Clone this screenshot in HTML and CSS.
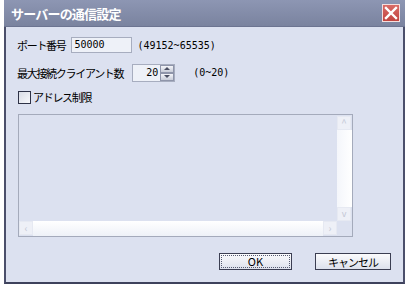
FILE: index.html
```html
<!DOCTYPE html>
<html lang="ja">

<head>
  <meta charset="UTF-8">
  <title>サーバーの通信設定</title>
  <link rel="stylesheet" href="styles.css">
</head>

<body>
  <div class="window">
    <div class="titlebar">
      <span class="title">サーバーの通信設定</span>
      <div class="close">
        <svg width="14" height="14" viewBox="0 0 14 14">
          <path d="M2 2 L12 12 M12 2 L2 12" stroke="#fff" stroke-width="2.4" stroke-linecap="square"/>
        </svg>
      </div>
    </div>

    <div class="content">
      <div class="row row-port">
        <span class="label">ポート番号</span>
        <div class="textbox port">50000</div>
        <span class="range">(49152~65535)</span>
      </div>

      <div class="row row-clients">
        <span class="label">最大接続クライアント数</span>
        <div class="spin">
          <div class="spin-value">20</div>
          <div class="spin-btns">
            <div class="spin-btn"><span class="arrow-up"></span></div>
            <div class="spin-btn"><span class="arrow-down"></span></div>
          </div>
        </div>
        <span class="range range-clients">(0~20)</span>
      </div>

      <div class="row row-check">
        <span class="checkbox"></span>
        <span class="label">アドレス制限</span>
      </div>

      <div class="listbox">
        <div class="list-main">
          <div class="list-area"></div>
          <div class="vscroll">
            <div class="sbtn">&#94;</div>
            <div class="vtrack"></div>
            <div class="sbtn sbtn-down">v</div>
          </div>
        </div>
        <div class="hscroll">
          <div class="sbtn">&lsaquo;</div>
          <div class="htrack"></div>
          <div class="sbtn">&rsaquo;</div>
          <div class="corner"></div>
        </div>
      </div>

      <div class="buttons">
        <button class="btn btn-ok"><span class="focus">OK</span></button>
        <button class="btn btn-cancel">キャンセル</button>
      </div>
    </div>
  </div>
</body>

</html>
```

FILE: styles.css
```css
body {
  margin: 0;
  background: #ffffff;
  font-family: "Noto Sans CJK JP", "DejaVu Sans", sans-serif;
  font-size: 11px;
  color: #000000;
}

.window {
  margin-left: 4px;
  width: 401px;
  height: 284px;
  box-sizing: border-box;
  background: #dce1f0;
  border-left: 2px solid #4b4f6b;
  border-right: 2px solid #4b4f6b;
  border-bottom: 2px solid #3e425c;
}

.titlebar {
  height: 27px;
  margin: 0 -2px;
  background: linear-gradient(#8d96b3, #7a839f);
  border-bottom: 1px solid #6c7491;
  box-sizing: border-box;
  display: flex;
  align-items: center;
  justify-content: space-between;
  padding: 0 5px 0 7px;
}

.title {
  color: #ffffff;
  font-size: 13px;
  font-weight: bold;
  letter-spacing: -0.8px;
}

.close {
  width: 18px;
  height: 18px;
  box-sizing: border-box;
  border: 1px solid #f4dede;
  background: linear-gradient(#d96b66, #c14440);
  display: flex;
  align-items: center;
  justify-content: center;
}

.content {
  padding: 9px 0 0 11px;
}

.row {
  display: flex;
  align-items: center;
}

.row-port {
  height: 18px;
}

.row-clients {
  height: 19px;
  margin-top: 9px;
}

.row-check {
  height: 14px;
  margin-top: 8px;
}

.label {
  line-height: 14px;
  letter-spacing: -1.3px;
}

.textbox {
  height: 16px;
  box-sizing: border-box;
  border: 1px solid #a7adbf;
  background: #eef1f8;
  font-family: "DejaVu Sans Mono", monospace;
  font-size: 10px;
  line-height: 14px;
}

.port {
  width: 61px;
  margin-left: 5px;
  padding-left: 3px;
}

.range {
  margin-left: 6px;
  font-family: "DejaVu Sans Mono", monospace;
  font-size: 10px;
}

.range-clients {
  margin-left: 18px;
}

.spin {
  display: flex;
  width: 43px;
  height: 18px;
  margin-left: 9px;
  box-sizing: border-box;
  border: 1px solid #a7adbf;
  background: #eef1f8;
}

.spin-value {
  flex: 1;
  text-align: right;
  padding-right: 2px;
  font-family: "DejaVu Sans Mono", monospace;
  font-size: 10px;
  line-height: 16px;
}

.spin-btns {
  width: 14px;
  display: flex;
  flex-direction: column;
}

.spin-btn {
  flex: 1;
  background: linear-gradient(#f4f5f9, #c8ccd8);
  border: 1px solid #8f95aa;
  display: flex;
  align-items: center;
  justify-content: center;
}

.arrow-up {
  border: 3px solid transparent;
  border-bottom: 3px solid #4a4e62;
  border-top: 0;
}

.arrow-down {
  border: 3px solid transparent;
  border-top: 3px solid #4a4e62;
  border-bottom: 0;
}

.checkbox {
  width: 11px;
  height: 11px;
  margin: 0 2px 0 1px;
  border: 1px solid #2e3247;
  background: linear-gradient(135deg, #d9dce6, #f7f8fb);
}

.listbox {
  width: 335px;
  height: 123px;
  margin-top: 10px;
  margin-left: 1px;
  box-sizing: border-box;
  border: 1px solid #a4aabb;
  display: flex;
  flex-direction: column;
}

.list-main {
  flex: 1;
  display: flex;
}

.list-area {
  flex: 1;
}

.vscroll {
  width: 15px;
  display: flex;
  flex-direction: column;
  padding-top: 1px;
}

.vtrack {
  flex: 1;
  background: linear-gradient(90deg, #f4f6fb, #ffffff);
}

.sbtn {
  width: 14px;
  height: 14px;
  box-sizing: border-box;
  border: 1px solid #e6e9f2;
  background: #eef0f7;
  color: #c4c8d6;
  font-size: 10px;
  line-height: 12px;
  text-align: center;
}

.sbtn-down {
  font-size: 9px;
}

.hscroll {
  height: 15px;
  display: flex;
}

.htrack {
  flex: 1;
  background: linear-gradient(#ffffff, #eef1f8);
}

.corner {
  width: 15px;
}

.buttons {
  display: flex;
  gap: 23px;
  margin-top: 16px;
  padding-left: 202px;
}

.btn {
  width: 73px;
  height: 17px;
  padding: 0;
  box-sizing: border-box;
  border: 1px solid #3b3e52;
  background: linear-gradient(#fbfbfd, #dde1ec);
  font-family: "Noto Sans CJK JP", sans-serif;
  font-size: 11px;
  line-height: 14px;
  letter-spacing: -1px;
  color: #000000;
}

.btn-cancel {
  width: 76px;
}

.btn-ok {
  display: flex;
  padding: 1px;
}

.focus {
  flex: 1;
  border: 1px dotted #555a70;
  line-height: 11px;
  letter-spacing: 0;
}
```
